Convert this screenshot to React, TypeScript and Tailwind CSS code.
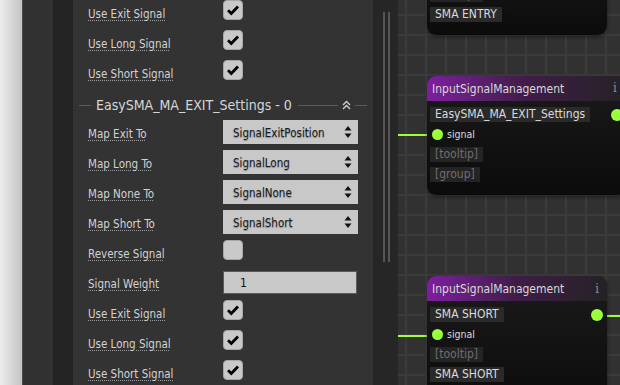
import React from "react";

const FONT = "font-['DejaVu_Sans_Condensed','DejaVu_Sans',sans-serif] font-stretch-condensed";

function Check() {
  return (
    <div className="w-[20px] h-[20px] rounded-[4px] bg-[#c9c9c9] border border-[#a8a8a8] flex items-center justify-center">
      <svg width="16" height="16" viewBox="0 0 16 16">
        <path d="M3 8.3 L6.3 11.5 L13 4.6" fill="none" stroke="#000" strokeWidth="2.8" strokeLinejoin="miter" />
      </svg>
    </div>
  );
}

function Empty() {
  return <div className="w-[20px] h-[20px] rounded-[4px] bg-[#c9c9c9] border border-[#a8a8a8]" />;
}

function Select({ value }: { value: string }) {
  return (
    <div className="w-[135px] h-[24px] bg-[#c8c8c8] flex items-center justify-between pl-[10px] pr-[6px]">
      <span className="text-[11.5px] text-[#1c1c1c] pt-[3px] [text-shadow:0_1px_1px_rgba(0,0,0,0.35)]">{value}</span>
      <svg width="8" height="14" viewBox="0 0 8 14">
        <polygon points="0.5,5.5 4,1 7.5,5.5" fill="#111" />
        <polygon points="0.5,8.5 4,13 7.5,8.5" fill="#111" />
      </svg>
    </div>
  );
}

function Label({ text }: { text: string }) {
  return (
    <div className="w-[135px] pt-[6px] text-[11.5px] leading-[16px] text-[#d2d2d2]">
      <span className="underline decoration-dotted decoration-[#9a9a9a] underline-offset-[2px]">{text}</span>
    </div>
  );
}

function Row({ label, children }: { label: string; children: React.ReactNode }) {
  return (
    <div className="h-[30px] shrink-0 flex items-start">
      <Label text={label} />
      {children}
    </div>
  );
}

function Tag({ text, dim }: { text: string; dim?: boolean }) {
  return (
    <div className="h-[15px] shrink-0 flex">
      <span
        className={
          "h-[15px] leading-[15px] px-[5px] text-[12px] " +
          (dim ? "bg-[#242424] text-[#6e6e6e]" : "bg-[#2a2a2a] text-[#dadada]")
        }
      >
        {text}
      </span>
    </div>
  );
}

function SignalRow() {
  return (
    <div className="h-[15px] shrink-0 flex items-center gap-[4px] pl-[2px]">
      <div className="w-[11px] h-[11px] rounded-full bg-[#9cff3c]" />
      <span className="text-[10.5px] text-[#dcdcdc]">signal</span>
    </div>
  );
}

function NodeHeader({ info = true }: { info?: boolean }) {
  return (
    <div className="h-[25px] rounded-t-[9px] bg-gradient-to-r from-[#7e1d9f] via-[#3f1c47] to-[#242124] flex items-center pl-[5px] pr-[8px]">
      <span className="text-[12px] text-[#d8d8d8]">InputSignalManagement</span>
      {info && <span className="ml-auto font-['DejaVu_Serif',serif] text-[13px] text-[#8c8c8c]">i</span>}
    </div>
  );
}

function Dot() {
  return <div className="absolute z-10 right-[4px] top-[8px] w-[12px] h-[12px] rounded-full bg-[#9cff3c]" />;
}

export default function App() {
  return (
    <div className={"w-[620px] h-[385px] overflow-hidden flex " + FONT}>
      <div className="w-[23px] shrink-0 h-full bg-gradient-to-r from-[#ececec] to-[#c4c4c4] border-r border-[#4a4a4a]" />
      <div className="w-[30px] shrink-0 h-full bg-[#313131]" />
      <div className="w-[20px] shrink-0 h-full bg-[#232323]" />
      <div className="w-[300px] shrink-0 h-full bg-[#333333] pl-[15px] flex flex-col">
        <Row label="Use Exit Signal"><Check /></Row>
        <Row label="Use Long Signal"><Check /></Row>
        <Row label="Use Short Signal"><Check /></Row>
        <div className="h-[30px] shrink-0 flex items-center -ml-[15px] pr-[6px]">
          <div className="ml-[6px] w-[12px] h-px bg-[#5c5c5c]" />
          <span className="ml-[5px] text-[14px] text-[#d6d6d6]">EasySMA_MA_EXIT_Settings - 0</span>
          <div className="ml-[6px] flex-1 h-px bg-[#5c5c5c]" />
          <svg className="mx-[4px]" width="9" height="10" viewBox="0 0 9 10">
            <path d="M1 5 L4.5 1.5 L8 5 M1 9 L4.5 5.5 L8 9" fill="none" stroke="#cfcfcf" strokeWidth="1.4" />
          </svg>
          <div className="w-[12px] h-px bg-[#5c5c5c]" />
        </div>
        <Row label="Map Exit To"><Select value="SignalExitPosition" /></Row>
        <Row label="Map Long To"><Select value="SignalLong" /></Row>
        <Row label="Map None To"><Select value="SignalNone" /></Row>
        <Row label="Map Short To"><Select value="SignalShort" /></Row>
        <Row label="Reverse Signal"><Empty /></Row>
        <Row label="Signal Weight">
          <div className="mt-[1px] w-[134px] h-[23px] bg-[#c8c8c8] border border-[#5a5a5a] flex items-center pl-[16px] text-[12px] text-[#111]">
            1
          </div>
        </Row>
        <Row label="Use Exit Signal"><Check /></Row>
        <Row label="Use Long Signal"><Check /></Row>
        <Row label="Use Short Signal"><Check /></Row>
      </div>
      <div className="w-[25px] shrink-0 h-full bg-[#262626] pl-[10px] pt-[12px]">
        <div className="w-[7px] h-[250px] border-x-2 border-[#555555]" />
      </div>
      <div className="relative w-[222px] shrink-0 h-full bg-[#313131] bg-[linear-gradient(to_right,#3b3b3b_2px,transparent_2px),linear-gradient(to_bottom,#3b3b3b_2px,transparent_2px)] bg-[length:20px_20px] bg-size-[20px_20px] bg-[position:7px_14px] bg-position-[7px_14px]">
        {/* wires */}
        <div className="absolute left-0 top-[134px] w-[36px] h-[2px] bg-[#9cff3c]" />
        <div className="absolute left-0 top-[335px] w-[36px] h-[2px] bg-[#9cff3c]" />
        <div className="absolute left-[204px] top-[315px] w-[20px] h-[2px] bg-[#9cff3c]" />

        {/* top node */}
        <div className="absolute left-[29px] bottom-[350px] w-[180px] rounded-b-[9px] bg-gradient-to-b from-[#141414] to-[#0b0b0b] px-[3px] pb-[13px] flex flex-col gap-[5px] shadow-[0_2px_4px_rgba(0,0,0,0.4)]">
          <Tag text="[tooltip]" dim />
          <Tag text="SMA ENTRY" />
        </div>

        {/* node 2 */}
        <div className="absolute left-[29px] top-[76px] w-[200px] rounded-[9px] bg-gradient-to-b from-[#1b1b1b] to-[#0b0b0b] shadow-[0_2px_4px_rgba(0,0,0,0.4)]">
          <NodeHeader info={false} />
          <div className="relative px-[3px] pt-[6px] pb-[13px] flex flex-col gap-[5px]">
            <Tag text="EasySMA_MA_EXIT_Settings" />
            <SignalRow />
            <Tag text="[tooltip]" dim />
            <Tag text="[group]" dim />
          </div>
        </div>
        <span className="absolute z-20 left-[215px] top-[80px] leading-[16px] font-['DejaVu_Serif',serif] text-[13px] text-[#8c8c8c]">i</span>
        <div className="absolute z-20 left-[213px] top-[109px] w-[12px] h-[12px] rounded-full bg-[#9cff3c]" />

        {/* node 3 */}
        <div className="absolute left-[29px] top-[276px] w-[180px] rounded-[9px] bg-gradient-to-b from-[#1b1b1b] to-[#0b0b0b] shadow-[0_2px_4px_rgba(0,0,0,0.4)]">
          <NodeHeader />
          <div className="relative px-[3px] pt-[6px] pb-[13px] flex flex-col gap-[5px]">
            <Tag text="SMA SHORT" />
            <SignalRow />
            <Tag text="[tooltip]" dim />
            <Tag text="SMA SHORT" />
            <Tag text="[group]" dim />
            <Dot />
          </div>
        </div>
      </div>
    </div>
  );
}
